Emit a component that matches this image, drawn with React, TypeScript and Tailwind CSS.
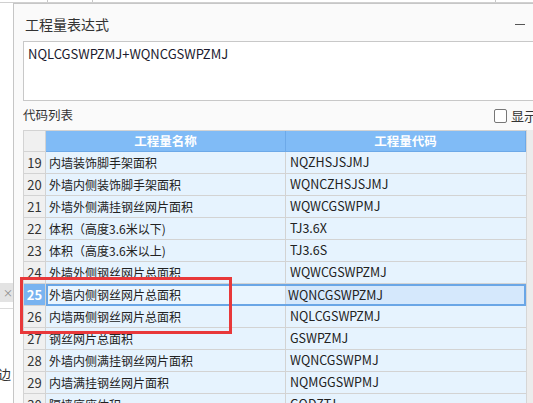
const rows = [
  { no: 19, name: "内墙装饰脚手架面积", code: "NQZHSJSJMJ" },
  { no: 20, name: "外墙内侧装饰脚手架面积", code: "WQNCZHSJSJMJ" },
  { no: 21, name: "外墙外侧满挂钢丝网片面积", code: "WQWCGSWPMJ" },
  { no: 22, name: "体积（高度3.6米以下)", code: "TJ3.6X" },
  { no: 23, name: "体积（高度3.6米以上)", code: "TJ3.6S" },
  { no: 24, name: "外墙外侧钢丝网片总面积", code: "WQWCGSWPZMJ" },
  { no: 25, name: "外墙内侧钢丝网片总面积", code: "WQNCGSWPZMJ", selected: true },
  { no: 26, name: "内墙两侧钢丝网片总面积", code: "NQLCGSWPZMJ" },
  { no: 27, name: "钢丝网片总面积", code: "GSWPZMJ" },
  { no: 28, name: "外墙内侧满挂钢丝网片面积", code: "WQNCGSWPMJ" },
  { no: 29, name: "内墙满挂钢丝网片面积", code: "NQMGGSWPMJ" },
  { no: 30, name: "隔墙底座体积", code: "GQDZTJ" },
];

const font = "font-['Microsoft_YaHei','Noto_Sans_CJK_SC',sans-serif]";

function Row({ no, name, code, selected }: { no: number; name: string; code: string; selected?: boolean }) {
  return (
    <div className="flex h-[22px] shrink-0">
      <div
        className={`w-[22px] shrink-0 border-r border-b border-[#d3d3d3] flex items-center justify-center text-[13px] ${
          selected ? "bg-[#79b3f0] text-white font-bold" : "bg-[#f0f0f0] text-[#333]"
        }`}
      >
        {no}
      </div>
      {selected ? (
        <div className="flex flex-1 border-2 border-[#6aa6e6]">
          <div className="w-[238px] shrink-0 border-r border-[#d3d3d3] bg-[#e9f5ff] flex items-center pl-[1px] text-[12px] text-[#222]">
            {name}
          </div>
          <div className="flex-1 bg-[#d5e8fc] flex items-center pl-[2px] text-[12.5px] text-[#222]">{code}</div>
        </div>
      ) : (
        <div className="flex flex-1">
          <div className="w-[240px] shrink-0 border-r border-b border-[#d3d3d3] bg-[#e6f3fe] flex items-center pl-[3px] text-[12px] text-[#222]">
            {name}
          </div>
          <div className="flex-1 border-b border-[#d3d3d3] bg-[#e6f3fe] flex items-center pl-[4px] text-[12.5px] text-[#222]">
            {code}
          </div>
        </div>
      )}
    </div>
  );
}

export default function App() {
  return (
    <div className={`relative w-[533px] h-[403px] overflow-hidden bg-white ${font}`}>
      {/* window underneath */}
      <div className="absolute inset-0">
        <div className="flex h-[3px] overflow-hidden border-b border-[#d0d0d0]">
          <div className="w-[48px] border-r border-[#c8c8c8]" />
          <div className="w-[45px] border-r border-[#c8c8c8]" />
          <div className="w-[403px] border-r border-[#c8c8c8]" />
        </div>
        <div className="absolute left-0 top-[283px] w-[13px] h-[19px] bg-[#e3e3e3] flex items-center pl-[3px] text-[10px] text-[#888]">
          ×
        </div>
        <div className="absolute left-0 top-[308px] w-[13px] border-t border-[#dcdcdc]" />
        <div className="absolute left-[-2px] top-[364px] text-[13px] text-[#333]">边</div>
      </div>

      {/* dialog */}
      <div className="absolute left-[13px] top-[3px] right-0 bottom-0 border-l border-t border-[#c6c6c6] bg-[#fafafa] flex flex-col">
        <div className="h-[37px] shrink-0 flex items-center justify-between pl-[11px] pr-[8px]">
          <span className="text-[14px] text-[#333] pt-[3px]">工程量表达式</span>
          <span className="w-[10px] h-[1px] bg-[#555] mt-[4px]" />
        </div>
        <div className="ml-[9px] mr-[-4px] h-[60px] shrink-0 border border-[#c8c8c8] bg-white px-[4px] pt-[2px] text-[13px] text-[#1a1a2e]">
          NQLCGSWPZMJ+WQNCGSWPZMJ
        </div>
        <div className="h-[29px] shrink-0 flex items-center justify-between pl-[9px]">
          <span className="text-[12.5px] text-[#333]">代码列表</span>
          <label className="flex items-center gap-[4px] mr-[-4px] text-[13px] text-[#333]">
            <span className="w-[13px] h-[14px] border border-[#777] rounded-[2px] bg-white" />
            显示
          </label>
        </div>
        <div className="relative flex flex-1 pl-[9px]">
          <div className="w-[503px] flex flex-col border-l border-t border-[#d3d3d3]">
            <div className="flex h-[21px] shrink-0">
              <div className="w-[22px] shrink-0 border-r border-b border-[#d3d3d3] bg-[#f0f0f0]" />
              <div className="w-[240px] shrink-0 border-r border-b border-[#6da9e8] bg-[#80bbf6] flex items-center justify-center text-[12.5px] font-bold text-white">
                工程量名称
              </div>
              <div className="flex-1 border-b border-r border-[#6da9e8] bg-[#80bbf6] flex items-center justify-center text-[12.5px] font-bold text-white">
                工程量代码
              </div>
            </div>
            {rows.map((r) => (
              <Row key={r.no} {...r} />
            ))}
          </div>
          <div className="flex-1 bg-[#ececec] border-l border-[#d6d6d6]" />
          {/* red highlight */}
          <div className="absolute left-[6px] top-[147px] w-[212px] h-[57px] border-[3px] border-[#e8383a] pointer-events-none" />
        </div>
      </div>
    </div>
  );
}
